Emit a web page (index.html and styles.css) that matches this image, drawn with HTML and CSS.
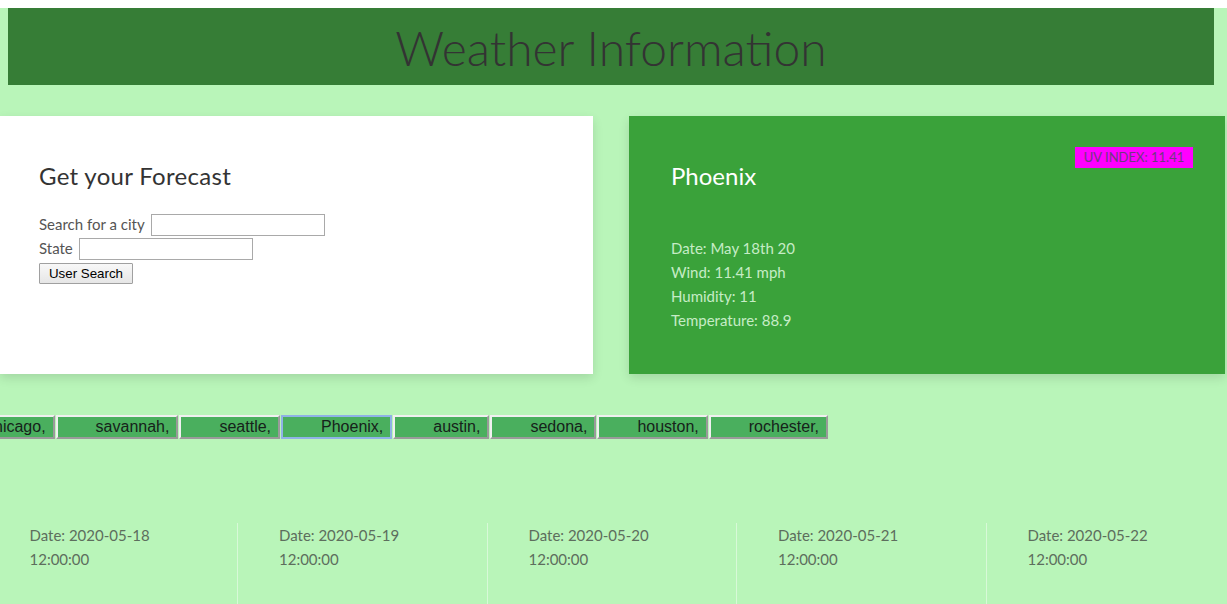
FILE: index.html
```html
<!DOCTYPE html>
<html lang="en">
<head>
<meta charset="utf-8">
<title>Weather Information</title>
<link rel="stylesheet" href="styles.css">
</head>
<body>
<header class="site-header">
  <h1 class="site-title">Weather Information</h1>
</header>

<main class="panels">
  <section class="card card-search">
    <h2 class="card-heading">Get your Forecast</h2>
    <form class="search-form">
      <div class="form-row">
        <label class="form-label" for="city">Search for a city</label>
        <input class="form-input" id="city" type="text">
      </div>
      <div class="form-row">
        <label class="form-label" for="state">State</label>
        <input class="form-input" id="state" type="text">
      </div>
      <div class="form-row">
        <button class="search-btn" type="button">User Search</button>
      </div>
    </form>
  </section>

  <section class="card card-current">
    <h2 class="city-name">Phoenix</h2>
    <span class="uv-badge">UV INDEX: 11.41</span>
    <ul class="current-list">
      <li>Date: May 18th 20</li>
      <li>Wind: 11.41 mph</li>
      <li>Humidity: 11</li>
      <li>Temperature: 88.9</li>
    </ul>
  </section>
</main>

<nav class="history">
  <button class="history-btn" type="button">chicago,</button>
  <button class="history-btn" type="button">savannah,</button>
  <button class="history-btn" type="button">seattle,</button>
  <button class="history-btn is-active" type="button">Phoenix,</button>
  <button class="history-btn" type="button">austin,</button>
  <button class="history-btn" type="button">sedona,</button>
  <button class="history-btn" type="button">houston,</button>
  <button class="history-btn" type="button">rochester,</button>
</nav>

<section class="forecast">
  <div class="forecast-day"><p>Date: 2020-05-18</p><p>12:00:00</p></div>
  <div class="forecast-day"><p>Date: 2020-05-19</p><p>12:00:00</p></div>
  <div class="forecast-day"><p>Date: 2020-05-20</p><p>12:00:00</p></div>
  <div class="forecast-day"><p>Date: 2020-05-21</p><p>12:00:00</p></div>
  <div class="forecast-day"><p>Date: 2020-05-22</p><p>12:00:00</p></div>
</section>
</body>
</html>
```

FILE: styles.css
```css
html {
  background: #ffffff;
}

body {
  margin: 8px 0 0;
  background: #b9f5b9;
  font-family: Lato, "Open Sans", sans-serif;
  color: #555;
  overflow: hidden;
  height: 596px;
}

.site-header {
  margin-left: 8px;
  width: 1206px;
  height: 77px;
  background: #367d36;
  display: flex;
  align-items: center;
  justify-content: center;
}

.site-title {
  margin: 0;
  font-family: Lato, "Open Sans", sans-serif;
  font-weight: 300;
  font-size: 48px;
  line-height: 56px;
  color: #333;
  padding-top: 2px;
}

.panels {
  display: flex;
  gap: 36px;
  margin-top: 31px;
}

.card {
  height: 258px;
  box-sizing: border-box;
  padding-top: 46px;
  box-shadow: 0 4px 10px rgba(0, 0, 0, 0.12);
}

.card-search {
  width: 593px;
  background: #ffffff;
  padding-left: 39px;
}

.card-heading {
  margin: 0;
  font-size: 24px;
  line-height: 28px;
  font-weight: 400;
  color: #333;
  letter-spacing: 0.3px;
}

.search-form {
  margin-top: 23px;
  display: flex;
  flex-direction: column;
}

.form-row {
  display: flex;
  align-items: center;
  height: 24px;
  gap: 4px;
}

.form-label {
  font-size: 15px;
  color: #555;
  line-height: 20px;
  padding-bottom: 2px;
}

.form-input {
  width: 174px;
  height: 22px;
  box-sizing: border-box;
  border: 1px solid #a9a9a9;
  padding: 0 2px;
  background: #fff;
  margin: 0 0 0 2px;
}

.search-btn {
  font-family: "Liberation Sans", Arial, sans-serif;
  font-size: 13.33px;
  height: 21px;
  width: 94px;
  padding: 0;
  border: 1px solid #a0a0a0;
  border-radius: 1px;
  background: linear-gradient(#f8f8f8, #e6e6e6);
  color: #000;
}

.card-current {
  position: relative;
  width: 596px;
  background: #3aa23a;
  padding-left: 42px;
}

.city-name {
  margin: 0;
  font-size: 24px;
  line-height: 28px;
  font-weight: 400;
  color: #ffffff;
}

.uv-badge {
  position: absolute;
  top: 31px;
  right: 32px;
  width: 118px;
  height: 21px;
  background: #ff00ff;
  color: #6e3a80;
  font-size: 13px;
  line-height: 21px;
  text-align: center;
}

.current-list {
  list-style: none;
  margin: 46px 0 0;
  padding: 0;
  font-size: 15px;
  line-height: 24px;
  color: #c6ecc6;
}

.history {
  display: flex;
  gap: 0;
  margin-top: 41px;
  margin-left: -54px;
}

.history-btn {
  height: 24px;
  margin-right: 1px;
  padding: 0 7px 0 38px;
  font-family: "Liberation Sans", Arial, sans-serif;
  font-size: 16px;
  color: #16221a;
  background: #4aaf5e;
  border: 2px solid;
  border-color: #f0f0f0 #9a9a9a #9a9a9a #f0f0f0;
  text-align: right;
}

.history-btn.is-active {
  border: 2px solid #8fb2e6;
}

.forecast {
  display: grid;
  grid-template-columns: repeat(5, 249.5px);
  margin-left: -12.5px;
  margin-top: 84px;
}

.forecast-day {
  height: 81px;
  padding-left: 41px;
  border-left: 1px solid rgba(255, 255, 255, 0.45);
  font-size: 15px;
  line-height: 24px;
  color: #5d6e5d;
}

.forecast-day:first-child {
  border-left-color: transparent;
}

.forecast-day p {
  margin: 0;
}
```
